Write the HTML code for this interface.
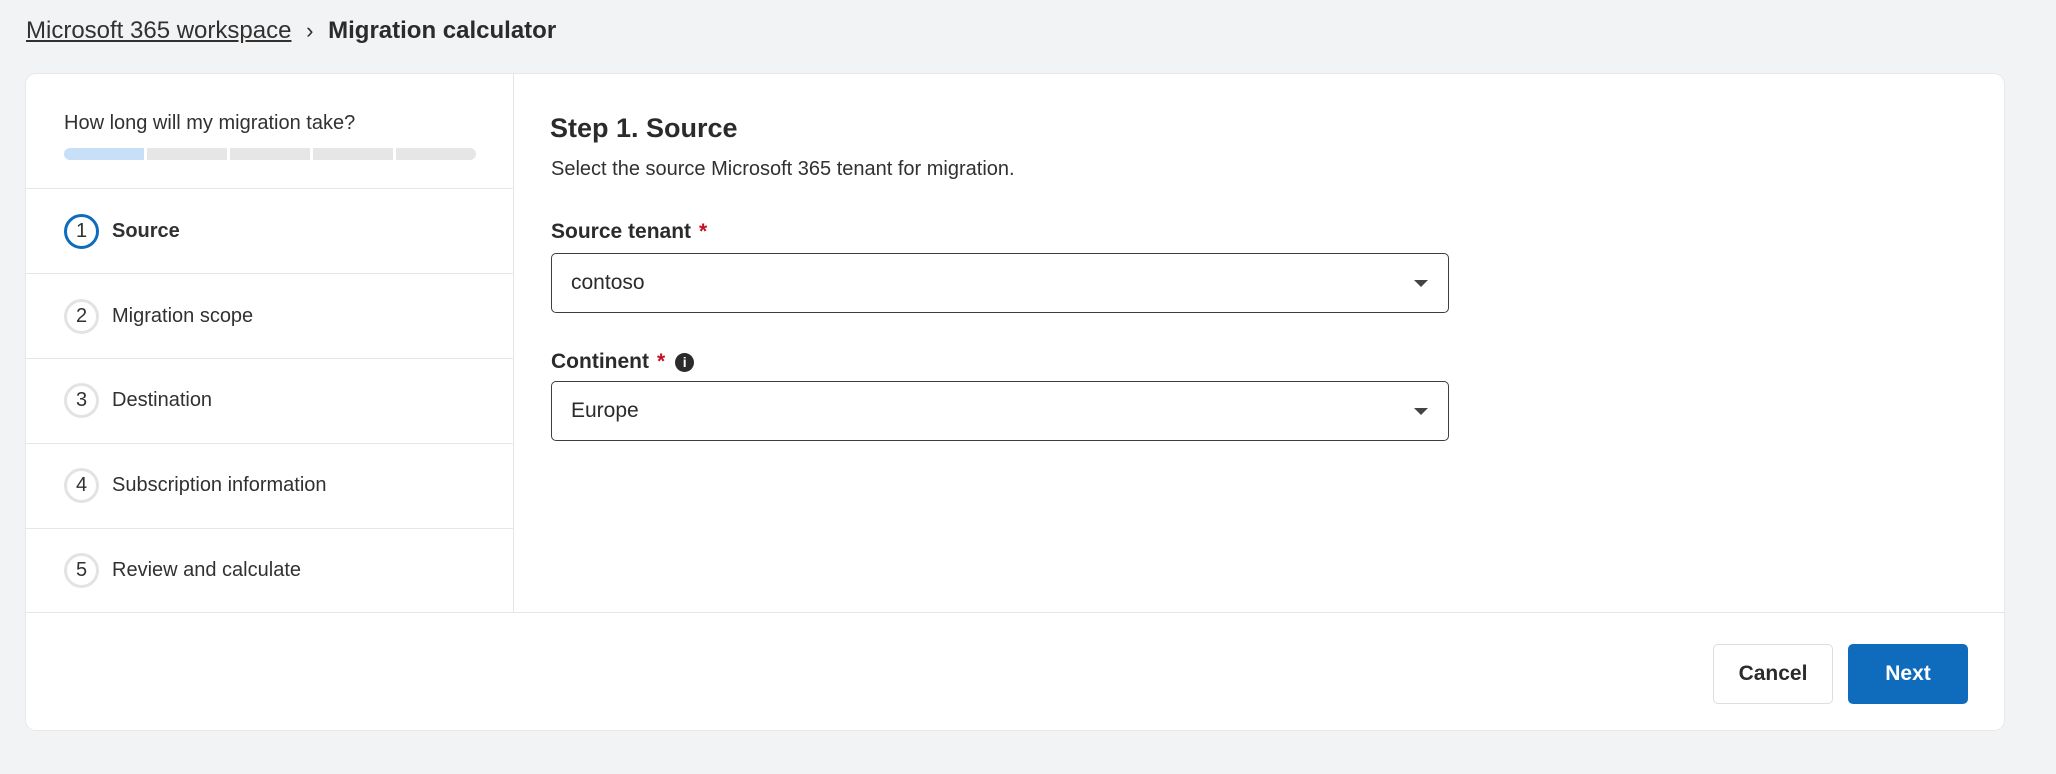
<!DOCTYPE html>
<html><head><style>
*{box-sizing:border-box;margin:0;padding:0}
body{width:2056px;height:774px;background:#f2f3f5;font-family:"Liberation Sans",sans-serif;color:#2b2b2b;position:relative;overflow:hidden}
.abs{position:absolute}
.bc{left:26px;top:16px;font-size:24px;line-height:30px;white-space:nowrap}
.bc u{color:#323130}
.card{left:25px;top:73px;width:1980px;height:658px;background:#fff;border-radius:11px;border:1px solid #e8e8e8}
.vl{left:513px;top:73px;width:1px;height:539px;background:#e6e6e6}
.hl{height:1px;background:#e6e6e6}
.step{left:64px;height:36px;display:flex;align-items:center;font-size:20px;color:#323130}
.circ{width:35px;height:35px;border-radius:50%;border:3px solid #e3e3e3;display:flex;align-items:center;justify-content:center;font-size:20px;margin-right:13px}
.sel{width:898px;height:60px;left:551px;border:1.5px solid #3b3f45;border-radius:5px;font-size:21px;padding-left:19px;display:flex;align-items:center}
.sel:after{content:"";position:absolute;right:20px;top:26px;border-left:7px solid transparent;border-right:7px solid transparent;border-top:7px solid #444}
.lab{left:551px;font-size:21px;font-weight:bold;color:#2b2b2b}
.req{color:#c50f1f;margin-left:8px}
.btn{top:644px;height:60px;width:120px;border-radius:5px;font-size:21px;font-weight:bold;display:flex;align-items:center;justify-content:center}
</style></head><body>
<div class="abs bc"><u>Microsoft 365 workspace</u> <span style="display:inline-block;margin:0 8px;font-size:22px">&#x203A;</span> <b>Migration calculator</b></div>
<div class="abs card"></div>
<div class="abs vl"></div>
<div class="abs" style="left:64px;top:112px;font-size:20px;color:#323130">How long will my migration take?</div>
<div class="abs" style="left:64px;top:148px;width:412px;height:12px;display:flex;gap:3px">
<div style="flex:1;background:#c7e0f8;border-radius:6px 0 0 6px"></div><div style="flex:1;background:#e6e6e6"></div><div style="flex:1;background:#e6e6e6"></div><div style="flex:1;background:#e6e6e6"></div><div style="flex:1;background:#e6e6e6;border-radius:0 6px 6px 0"></div></div>
<div class="abs hl" style="left:25px;top:188px;width:488px"></div>
<div class="abs hl" style="left:25px;top:273px;width:488px"></div>
<div class="abs hl" style="left:25px;top:358px;width:488px"></div>
<div class="abs hl" style="left:25px;top:443px;width:488px"></div>
<div class="abs hl" style="left:25px;top:528px;width:488px"></div>
<div class="abs hl" style="left:25px;top:612px;width:1980px"></div>
<div class="abs step" style="top:213px"><div class="circ" style="border-color:#0f6cbd">1</div><b>Source</b></div>
<div class="abs step" style="top:298px"><div class="circ">2</div>Migration scope</div>
<div class="abs step" style="top:382px"><div class="circ">3</div>Destination</div>
<div class="abs step" style="top:467px"><div class="circ">4</div>Subscription information</div>
<div class="abs step" style="top:552px"><div class="circ">5</div>Review and calculate</div>
<div class="abs" style="left:550px;top:113px;font-size:27px;font-weight:bold">Step 1. Source</div>
<div class="abs" style="left:551px;top:158px;font-size:20px;color:#323130">Select the source Microsoft 365 tenant for migration.</div>
<div class="abs lab" style="top:220px">Source tenant<span class="req">*</span></div>
<div class="abs sel" style="top:253px">contoso</div>
<div class="abs lab" style="top:350px">Continent<span class="req">*</span><span style="display:inline-block;width:19px;height:19px;border-radius:50%;background:#2b2b2b;color:#fff;font-size:14px;text-align:center;line-height:19px;margin-left:10px;vertical-align:1px">i</span></div>
<div class="abs sel" style="top:381px">Europe</div>
<div class="abs btn" style="left:1713px;border:1px solid #ddd;color:#2b2b2b;background:#fff">Cancel</div>
<div class="abs btn" style="left:1848px;background:#0f6cbd;color:#fff">Next</div>
</body></html>
